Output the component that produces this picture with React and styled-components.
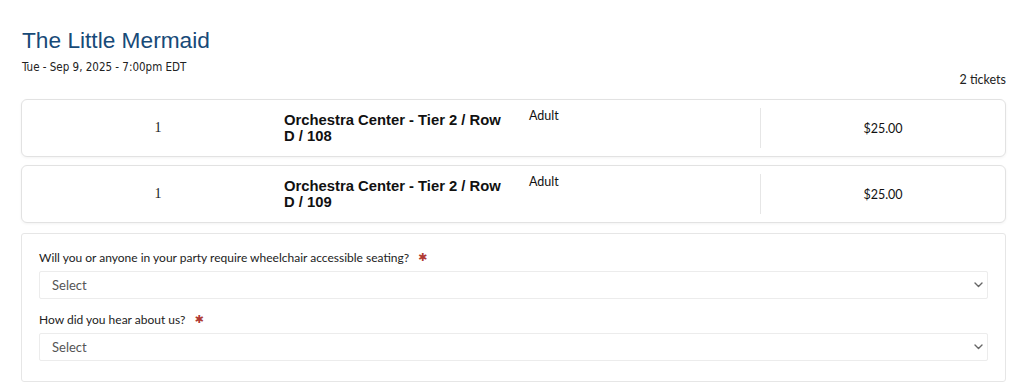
import React from 'react';
import styled, { createGlobalStyle } from 'styled-components';

const GlobalStyle = createGlobalStyle`
    body {
        margin: 0;
        background: #ffffff;
        font-family: "Liberation Sans", Arial, sans-serif;
        color: #1a1a1a;
    }
`

const tickets = [
    { qty: 1, seat: 'Orchestra Center - Tier 2 / Row D / 108', type: 'Adult', price: '$25.00' },
    { qty: 1, seat: 'Orchestra Center - Tier 2 / Row D / 109', type: 'Adult', price: '$25.00' }
];

const questions = [
    'Will you or anyone in your party require wheelchair accessible seating?',
    'How did you hear about us?'
];

const Chevron = () => (
    <svg width="9" height="6" viewBox="0 0 9 6" fill="none">
        <path d="M1 1l3.5 3.5L8 1" stroke="#666" strokeWidth="1.4" strokeLinecap="round" strokeLinejoin="round" />
    </svg>
);

export default function App() {
    return (
        <Page>
            <GlobalStyle />
            <Title>The Little Mermaid</Title>
            <EventDate>Tue - Sep 9, 2025 - 7:00pm EDT</EventDate>
            <Count>2 tickets</Count>
            <Cards>
                {tickets.map((t, i) => (
                    <Card key={i}>
                        <Qty>{t.qty}</Qty>
                        <Seat>{t.seat}</Seat>
                        <Type>{t.type}</Type>
                        <Price>{t.price}</Price>
                    </Card>
                ))}
            </Cards>
            <Form>
                {questions.map((q, i) => (
                    <Field key={i}>
                        <Label>
                            {q}
                            <Required>✱</Required>
                        </Label>
                        <SelectBox>
                            <Select defaultValue="">
                                <option value="">Select</option>
                            </Select>
                            <Arrow><Chevron /></Arrow>
                        </SelectBox>
                    </Field>
                ))}
            </Form>
        </Page>
    );
}

const Page = styled.div`
    padding: 27px 18px 0 21px;
    display: flex;
    flex-direction: column;
`

const Title = styled.h1`
    margin: 0 0 0 1px;
    font-family: "Liberation Sans", Arial, sans-serif;
    font-weight: 400;
    font-size: 22.7px;
    line-height: 26px;
    color: #174a78;
`

const EventDate = styled.div`
    margin: 6px 0 0 1px;
    font-family: "DejaVu Sans Condensed", "DejaVu Sans", sans-serif;
    font-size: 11.5px;
    line-height: 16px;
    color: #222;
`

const Count = styled.div`
    align-self: flex-end;
    margin-top: -3px;
    font-family: "Lato", sans-serif;
    font-size: 12.5px;
    line-height: 16px;
    color: #222;
`

const Cards = styled.div`
    margin-top: 11px;
    display: flex;
    flex-direction: column;
    gap: 8px;
`

const Card = styled.div`
    height: 58px;
    box-sizing: border-box;
    border: 1px solid #e2e2e2;
    border-radius: 6px;
    background: #fff;
    box-shadow: 0 1px 3px rgba(0, 0, 0, 0.05);
    display: grid;
    grid-template-columns: 262px 235px 241px 1fr;
    padding: 8px 0;
`

const Qty = styled.div`
    padding-left: 10px;
    display: flex;
    align-items: center;
    justify-content: center;
    font-family: "Liberation Serif", "Times New Roman", serif;
    font-size: 14px;
    color: #222;
`

const Seat = styled.div`
    display: flex;
    align-items: center;
    padding-right: 12px;
    font-family: "Liberation Sans", Arial, sans-serif;
    font-weight: 700;
    font-size: 14.8px;
    line-height: 16px;
    color: #111;
`

const Type = styled.div`
    padding-left: 10px;
    font-family: "Lato", sans-serif;
    font-size: 12.5px;
    line-height: 16px;
    color: #111;
`

const Price = styled.div`
    border-left: 1px solid #e6e6e6;
    display: flex;
    align-items: center;
    justify-content: center;
    font-family: "Lato", sans-serif;
    font-size: 12.5px;
    color: #111;
`

const Form = styled.div`
    margin-top: 10px;
    border: 1px solid #e6e6e6;
    border-radius: 3px;
    padding: 16px 17px 20px 17px;
    display: flex;
    flex-direction: column;
    gap: 13px;
`

const Field = styled.div`
    display: flex;
    flex-direction: column;
    gap: 5px;
`

const Label = styled.label`
    display: flex;
    align-items: center;
    height: 16px;
    font-family: "Lato", sans-serif;
    font-size: 12px;
    line-height: 16px;
    color: #222;
`

const Required = styled.span`
    margin-left: 9px;
    color: #b03a33;
    font-family: "DejaVu Sans", sans-serif;
    font-size: 11px;
    line-height: 16px;
`

const SelectBox = styled.div`
    position: relative;
`

const Select = styled.select`
    width: 100%;
    height: 28px;
    box-sizing: border-box;
    appearance: none;
    border: 1px solid #ececec;
    border-radius: 2px;
    background: #fff;
    padding: 0 12px;
    font-family: "Lato", sans-serif;
    font-size: 13px;
    color: #555;
    outline: none;
`

const Arrow = styled.span`
    position: absolute;
    right: 5px;
    top: 11px;
    display: flex;
    pointer-events: none;
`
